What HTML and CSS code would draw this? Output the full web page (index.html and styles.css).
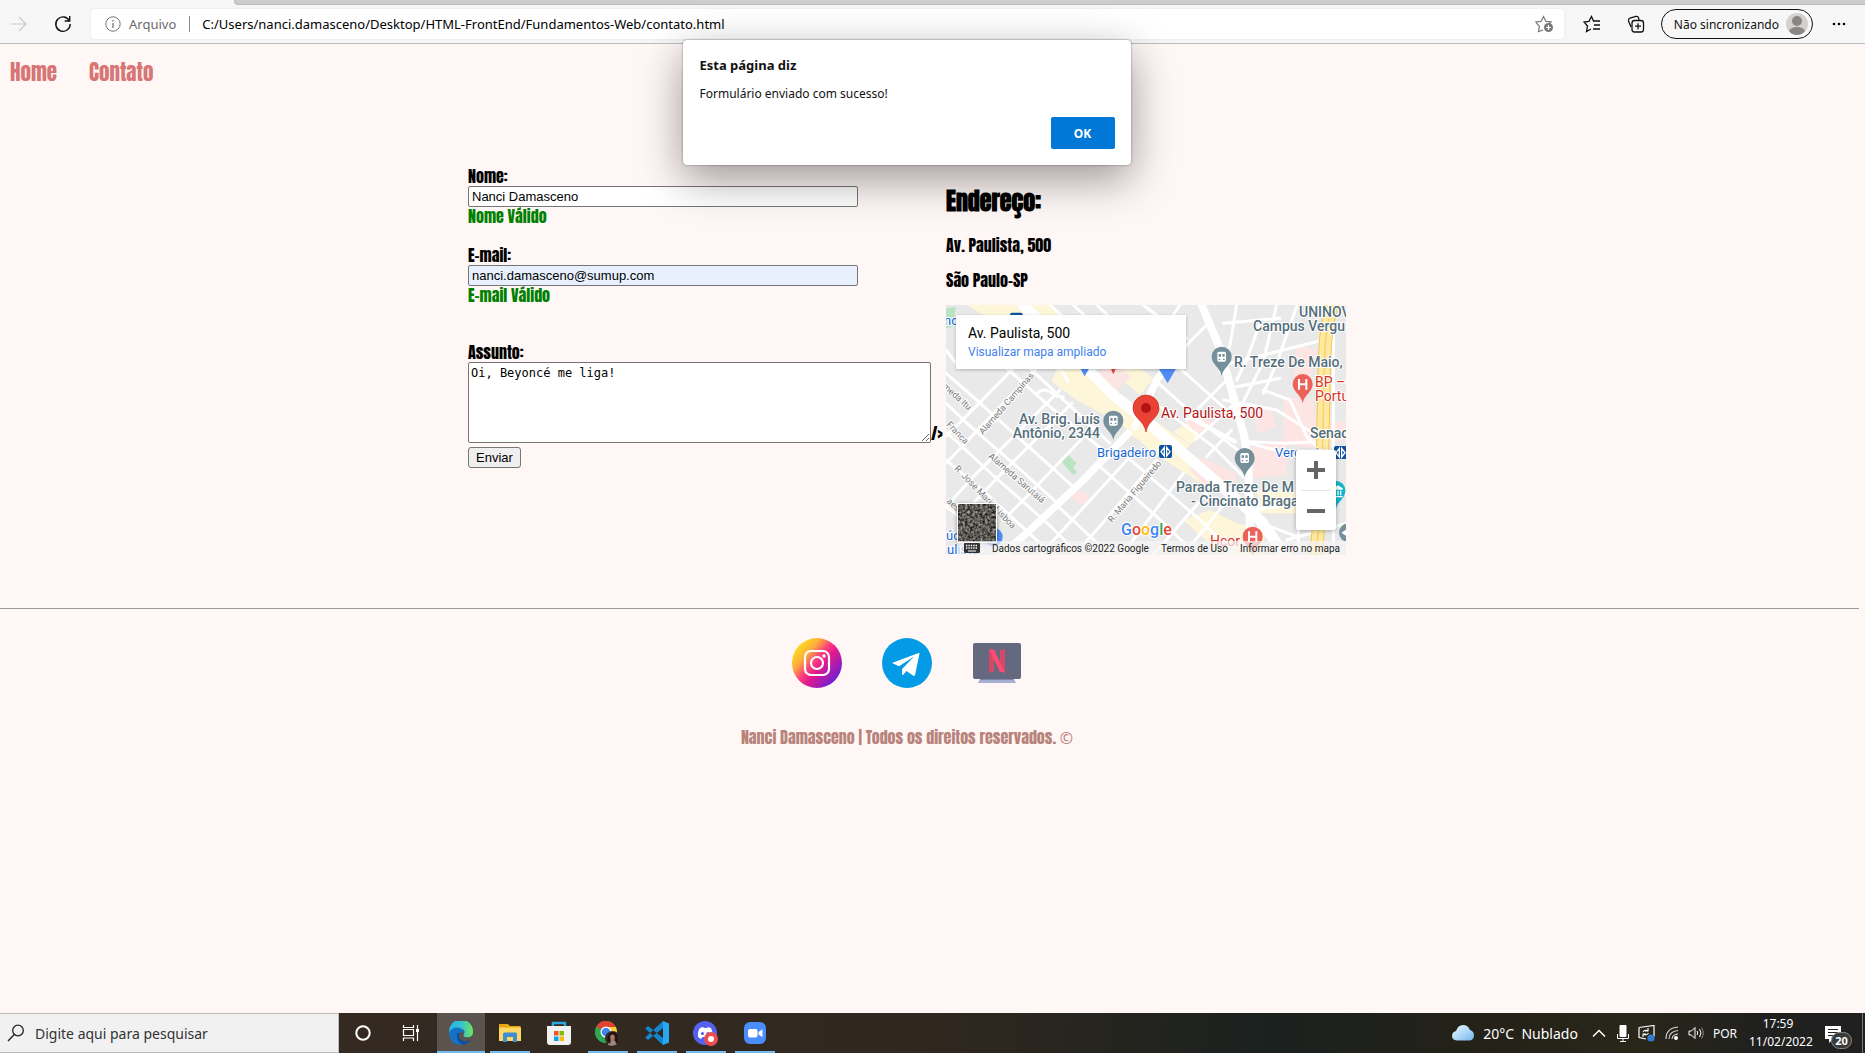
FILE: index.html
```html
<!DOCTYPE html>
<html lang="pt-BR">
<head>
<meta charset="utf-8">
<meta name="viewport" content="width=device-width, initial-scale=1">
<title>Contato</title>
<link rel="stylesheet" href="styles.css">
</head>
<body>
<header class="browser">
  <div class="tab-strip"></div>
  <div class="toolbar">
    <button class="icon-button forward" type="button" aria-label="Avançar"><svg width="18" height="18" viewBox="0 0 18 18"><path d="M1 9h15M9 2l7 7-7 7" fill="none" stroke="#c9c9c9" stroke-width="1.2"/></svg></button>
    <button class="icon-button reload" type="button" aria-label="Atualizar"><svg width="18" height="18" viewBox="0 0 18 18"><path d="M15.500 6A7.200 7.200 0 1 0 16.200 9M15.700 1v5h-5" fill="none" stroke="#111" stroke-width="1.4"/></svg></button>
    <div class="address">
      <svg width="16" height="16" viewBox="0 0 16 16"><circle cx="8" cy="8" r="7.200" fill="none" stroke="#767676"/><path d="M8 7v5M8 4v1.500" stroke="#767676" stroke-width="1.300"/></svg>
      <span class="scheme">Arquivo</span>
      <span class="url">C:/Users/nanci.damasceno/Desktop/HTML-FrontEnd/Fundamentos-Web/contato.html</span>
      <button class="icon-button" type="button" aria-label="Adicionar aos favoritos"><svg width="20" height="18" viewBox="0 0 20 18"><path d="M8 15l-4.500 1.500.8-5.200L1 7l5-.6L8.500 1.500 11 6.400l5 .6-2 2" fill="none" stroke="#767676" stroke-width="1.200"/><circle cx="13.500" cy="12.500" r="4.500" fill="#767676"/><path d="M11 12.500h5M13.500 10v5" stroke="#fff" stroke-width="1.200"/></svg></button>
    </div>
    <button class="icon-button" type="button" aria-label="Favoritos"><svg width="18" height="18" viewBox="0 0 18 18"><path d="M8 14l-4.500 2.500L4.500 11 1 7l5-.6L8.500 1.500 10.500 6h6.500M11 10h6M10 14h7" fill="none" stroke="#111" stroke-width="1.300"/></svg></button>
    <button class="icon-button" type="button" aria-label="Coleções"><svg width="18" height="18" viewBox="0 0 18 18"><path d="M4 12L1.500 6Q1 4 3 3l6-1.600q2-.4 2.500 1.200L12 5" fill="none" stroke="#111" stroke-width="1.300"/><rect x="5" y="5.500" width="11.500" height="11.500" rx="2.500" fill="none" stroke="#111" stroke-width="1.300"/><path d="M8 11.200h6M11 8.200v6" stroke="#111" stroke-width="1.300"/></svg></button>
    <button class="profile" type="button">Não sincronizando
      <svg width="22" height="22" viewBox="0 0 22 22"><circle cx="11" cy="11" r="11" fill="#d3d0cd"/><circle cx="11" cy="8" r="5" fill="#8b8683"/><path d="M3 18q2-4 8-4t8 4q-3 4-8 4t-8-4z" fill="#8b8683"/></svg>
    </button>
    <button class="icon-button more" type="button" aria-label="Mais opções"><svg width="14" height="4" viewBox="0 0 14 4"><circle cx="2" cy="2" r="1.300"/><circle cx="7" cy="2" r="1.300"/><circle cx="12" cy="2" r="1.300"/></svg></button>
  </div>
</header>

<div class="page">
  <nav class="menu"><a href="#home">Home</a><a href="#contato">Contato</a></nav>
  <main class="contact">
    <form class="form">
      <div class="field">
        <label for="nome">Nome:</label>
        <input id="nome" type="text" value="Nanci Damasceno">
        <span class="valid">Nome Válido</span>
      </div>
      <div class="field">
        <label for="email">E-mail:</label>
        <input id="email" class="autofilled" type="text" value="nanci.damasceno@sumup.com">
        <span class="valid">E-mail Válido</span>
      </div>
      <div class="field subject">
        <label for="assunto">Assunto:</label>
        <div class="message"><textarea id="assunto">Oi, Beyoncé me liga!</textarea><span>/&gt;</span></div>
        <button class="send" type="button">Enviar</button>
      </div>
    </form>
    <section class="place">
      <h2>Endereço:</h2>
      <p>Av. Paulista, 500</p>
      <p>São Paulo-SP</p>
      <div class="map">
        <svg class="map-canvas" viewBox="0 0 400 250">
          <svg width="400" height="250" viewBox="18 15 1200 750">
            <rect x="18" y="15" width="1200" height="750" fill="#e9e9e9"/>
            <g fill="#fef6d9">
              <path d="M80 15H330L380 60 220 60 180 45 130 45z"/>
              <path d="M350 205h90l170 150 160 140 90 80-60-15-160-100-100-90-130-70-75-55z"/>
              <path d="M620 345l130 90-40 45-150-80z"/><path d="M520 205h80l40 30-40 50-70-60z"/>
              <path d="M730 660l80-30 80 40 90 20-20 75H850l-70-60z"/><path d="M700 395l80-50 30 30-60 60z"/><path d="M950 570h120v70h-110z"/>
            </g>
            <g fill="#fce5e3">
              <path d="M490 205h50l35 25-65 60-60-50z"/><path d="M385 590l15-22 52 18-22 32z"/>
              <path d="M750 510l30-40 110 50-10 45-90-10z"/><path d="M930 440l110-20v105l-100 10z"/>
              <path d="M1030 290l90 10 20 150-110-20z"/><path d="M1070 130l60 20-20 90-50-10z"/><path d="M940 340l50-20 20 60-55 20z"/><path d="M740 365l35-25 45 30-45 40z"/>
              <path d="M1165 365h53v60h-53z"/><path d="M300 150l60-20 20 70h-60z"/>
            </g>
            <path d="M365 485l20-20 25 25-12 12 14 16-14 6zM18 25l30-5-10 60-20 5z" fill="#b9e3c2"/>
            <g fill="none" stroke="#fff" stroke-width="9" stroke-linejoin="round" stroke-linecap="round">
              <path d="M18 220L110 300l100 90 190 170M18 310l80 75 150 130 110 100M18 395l140 130 170 150 90 90M18 480l130 110 120 110 70 65M200 205L330 320l85 70 80 65M270 205l240 225M18 620l190 145"/>
              <path d="M18 150L60 205M220 205L18 410M290 205L90 415 18 490M360 270L100 530 18 620M395 310L175 530 100 610M460 380L245 605 190 660M650 205"/>
              <path d="M570 470L300 765M650 480L470 690 400 765M730 520L545 765M800 580L640 765M850 615L730 765"/>
              <path d="M480 500l170 150 120 115M560 470l220 190 100 100M350 615l160 150"/>
              <path d="M650 245L800 380l120 90M720 205l140 125M620 290l200 150 90 90"/>
              <path d="M680 205l70-80 60-60M740 360l120-120M765 420l110-100M800 470l75-80"/>
              <path d="M890 15l-20 120-30 80M960 70l-40 110-30 60M1010 15l-40 170-70 140 20 100M1070 20l-60 170-40 90M850 70l170-15M870 190L1150 120M890 260l130-25M850 300l160 30 110 70M970 270l80 30 50 110 60 60"/>
              <path d="M925 425l110 5 100-5M930 430l150 40M930 630l130-15M940 660l130 50M955 600v110M1075 450v300M1120 640l98-60M1180 15v750M1040 720l178-50"/>
              <path d="M330 15l110 100M400 15l90 85M470 15l80 75M720 15l-80 120M610 15l130 100"/>
              <path d="M290 280c40-30 50 20 80 10M360 205l25 40"/>
            </g>
            <g fill="none" stroke="#fff" stroke-linecap="round" stroke-linejoin="round">
              <path d="M250 15l270 270 95 75 260 225 90 80 70 100" stroke-width="32"/>
              <path d="M565 400L425 545 260 700 180 765M585 380l65-140 60-80" stroke-width="22"/>
              <path d="M785 15l55 130 72 260 13 85 5 220" stroke-width="24"/>
              <path d="M885 425l-130-70" stroke-width="13"/>
            </g>
            <path d="M1182 0C1130 130 1170 340 1128 765" fill="none" stroke="#f8c74e" stroke-width="40"/>
            <path d="M1182 0C1130 130 1170 340 1128 765" fill="none" stroke="#fdeaa0" stroke-width="34"/>
            <path d="M1182 0C1130 130 1170 340 1128 765" fill="none" stroke="#f8cf69" stroke-width="4"/>
            <g fill="#4f8df5"><path d="M420 205h28l-14 24zM655 205h54l-26 44z"/><circle cx="160" cy="711" r="28"/></g>
            <path d="M512 205h16l-8 18z" fill="#e94235"/>
            <rect x="210" y="38" width="38" height="20" rx="6" fill="#0d53a1"/>
            <g fill="#758f9b">
              <path d="M520 420c-4-26-30-34-30-58a30 30 0 0 1 60 0c0 24-26 32-30 58zM845 228c-4-26-30-34-30-58a30 30 0 0 1 60 0c0 24-26 32-30 58zM914 532c-4-26-30-34-30-58a30 30 0 0 1 60 0c0 24-26 32-30 58z"/>
              <circle cx="1225" cy="698" r="28"/>
            </g>
            <path d="M1204 698l14-9v18z" fill="#fff"/>
            <g fill="#fff"><rect x="507" y="347" width="26" height="30" rx="5"/><rect x="832" y="155" width="26" height="30" rx="5"/><rect x="901" y="459" width="26" height="30" rx="5"/></g>
            <g fill="#758f9b"><path d="M511 354h7v8h-7zM522 354h7v8h-7zM511 368h5v4h-5zM524 368h5v4h-5zM836 162h7v8h-7zM847 162h7v8h-7zM836 176h5v4h-5zM849 176h5v4h-5zM905 466h7v8h-7zM916 466h7v8h-7zM905 480h5v4h-5zM918 480h5v4h-5z"/></g>
            <g fill="#ec625b"><path d="M1088 310c-4-26-30-34-30-58a30 30 0 0 1 60 0c0 24-26 32-30 58zM938 768c-4-26-30-34-30-58a30 30 0 0 1 60 0c0 24-26 32-30 58z"/></g>
            <path d="M1077 237v32M1099 237v32M1077 253h22M927 694v32M949 694v32M927 710h22" fill="none" stroke="#fff" stroke-width="6"/>
            <path d="M1188 628v-86a30 30 0 0 1 28 32c0 22-24 30-28 54z" fill="#12b5cb"/><path d="M1180 565l14-9 14 9v4h-28zM1184 572h4v14h-4zM1192 572h4v14h-4zM1200 572h4v14h-4zM1180 588h28v4h-28z" fill="#fff"/>
            <path d="M618 396c-5-34-39-42-39-72a39 39 0 0 1 78 0c0 30-34 38-39 72z" fill="#ea4335" stroke="#c5221f" stroke-width="2"/>
            <circle cx="618" cy="324" r="15" fill="#b31412"/>
            <g fill="#0d53a1"><rect x="657" y="435" width="39" height="39" rx="6"/><rect x="1182" y="438" width="39" height="39" rx="6"/></g>
            <path d="M673 442l-10 13 10 13zM680 442l10 13-10 13zM1198 445l-10 13 10 13zM1205 445l10 13-10 13z" fill="none" stroke="#fff" stroke-width="4"/>
          </svg>
          <g class="street">
            <text transform="translate(37 130) rotate(-49)">Alameda Campinas</text>
            <text transform="translate(-4 82) rotate(42)">meda Itu</text>
            <text transform="translate(0 120) rotate(46)">Franca</text>
            <text transform="translate(42 152) rotate(41)">Alameda Sarutaiá</text>
            <text transform="translate(8 164) rotate(46)">R. José Maria Lisboa</text>
            <text transform="translate(166 218) rotate(-50)">R. Maria Figueiredo</text>
            <text transform="translate(0 197) rotate(42)">aes</text>
          </g>
          <g class="label">
            <text x="154" y="119" text-anchor="end">Av. Brig. Luís</text>
            <text x="154" y="133" text-anchor="end">Antônio, 2344</text>
            <text x="353" y="12">UNINOV</text>
            <text x="307" y="26">Campus Vergu</text>
            <text x="288" y="62">R. Treze De Maio,</text>
            <text x="364" y="133">Senac</text>
            <text x="230" y="187">Parada Treze De M</text>
            <text x="245" y="201">- Cincinato Braga</text>
          </g>
          <g class="label station"><text x="151" y="152">Brigadeiro</text><text x="329" y="152">Vergueiro</text><text x="-2" y="20">no</text><text x="0" y="235">úc</text><text x="1" y="249">ulista</text></g>
          <g class="label hospital"><text x="369" y="82">BP –</text><text x="369" y="96">Portu</text><text x="264" y="241">Hcor</text></g>
          <text class="label target" x="215" y="113">Av. Paulista, 500</text>
          <text class="logo" x="175" y="230"><tspan fill="#4285f4">G</tspan><tspan fill="#ea4335">o</tspan><tspan fill="#fbbc05">o</tspan><tspan fill="#4285f4">g</tspan><tspan fill="#34a853">l</tspan><tspan fill="#ea4335">e</tspan></text>
        </svg>
        <div class="map-card"><strong>Av. Paulista, 500</strong><a href="#mapa">Visualizar mapa ampliado</a></div>
        <div class="zoom"><button type="button" aria-label="Aumentar zoom"><svg width="18" height="18" viewBox="0 0 18 18"><path d="M0 9h18M9 0v18" stroke="#666" stroke-width="4"/></svg></button><button type="button" aria-label="Diminuir zoom"><svg width="18" height="18" viewBox="0 0 18 18"><path d="M0 9h18" stroke="#666" stroke-width="4"/></svg></button></div>
        <button class="satellite" type="button" aria-label="Mostrar imagens de satélite"><svg width="38" height="38" viewBox="0 0 38 38"><filter id="ground" x="0" y="0" width="1" height="1" color-interpolation-filters="sRGB"><feTurbulence type="fractalNoise" baseFrequency=".4" numOctaves="3" seed="4"/><feColorMatrix values="1 0 0 0 -.14 .9 .1 0 0 -.15 .9 0 .1 0 -.17 0 0 0 0 1"/></filter><rect width="38" height="38" filter="url(#ground)"/></svg></button>
        <div class="map-footer">
          <svg width="16" height="10" viewBox="0 0 16 10"><rect width="16" height="10" rx="1" fill="#333"/><path d="M2 2.500h12M2 5h12" stroke="#fff" stroke-width="1.300" stroke-dasharray="1.400 1"/><path d="M4 8h8" stroke="#fff"/></svg>
          <span>Dados cartográficos ©2022 Google</span><a href="#termos">Termos de Uso</a><a href="#erro">Informar erro no mapa</a>
        </div>
      </div>
    </section>
  </main>
  <footer class="footer">
    <div class="social">
      <a href="#instagram" aria-label="Instagram"><svg width="50" height="50" viewBox="0 0 50 50"><defs><linearGradient id="insta" x1=".1" y1=".15" x2=".9" y2=".85"><stop offset="0" stop-color="#fbe01d"/><stop offset=".25" stop-color="#fdac3a"/><stop offset=".45" stop-color="#fb3d7d"/><stop offset=".6" stop-color="#e41a8b"/><stop offset="1" stop-color="#6720d8"/></linearGradient></defs><circle cx="25" cy="25" r="25" fill="url(#insta)"/><rect x="13" y="13" width="24" height="24" rx="6" fill="none" stroke="#fff" stroke-width="2.200"/><circle cx="25" cy="25" r="6" fill="none" stroke="#fff" stroke-width="2.200"/><circle cx="32" cy="18" r="1.700" fill="#fff"/></svg></a>
      <a href="#telegram" aria-label="Telegram"><svg width="50" height="50" viewBox="0 0 50 50"><circle cx="25" cy="25" r="25" fill="#039be5"/><path d="M10 25l26.500-10q1.200-.2 1 1l-4.500 21q-.5 1.500-2 .6L24.500 33l-3.500 4q-.9.300-.9-.8V31l12-12.500L17 28.200z" fill="#fff"/></svg></a>
      <a href="#netflix" aria-label="Netflix"><svg width="50" height="50" viewBox="0 0 50 50"><path d="M8 41h34l2 4H6z" fill="#a4afd2"/><path d="M8 40h33v2H8z" fill="#7d86aa"/><rect x="1" y="5" width="48" height="36" rx="2" fill="#646980"/><path d="M17 11.500h5V34l-5 .5z" fill="#d3486b"/><path d="M28 11.500h5V34.500l-5-.5z" fill="#d3486b"/><path d="M17 11.500h5L33 34.500l-5-.5z" fill="#ff4b70"/></svg></a>
    </div>
    <p>Nanci Damasceno | Todos os direitos reservados. <span class="copy">©</span></p>
  </footer>
</div>

<div class="dialog" role="alertdialog" aria-labelledby="dialog-title">
  <h1 id="dialog-title">Esta página diz</h1>
  <p>Formulário enviado com sucesso!</p>
  <button type="button">OK</button>
</div>

<div class="taskbar">
  <label class="search"><svg width="18" height="18" viewBox="0 0 18 18"><circle cx="11" cy="6.500" r="5.300" fill="none" stroke="#222" stroke-width="1.300"/><path d="M7.300 10.500L1 17" stroke="#222" stroke-width="1.400"/></svg><input type="text" placeholder="Digite aqui para pesquisar" aria-label="Pesquisar"></label>
  <div class="apps">
    <button type="button" aria-label="Cortana"><svg width="16" height="16" viewBox="0 0 16 16"><circle cx="8" cy="8" r="6.700" fill="none" stroke="#fff" stroke-width="2"/></svg></button>
    <button type="button" aria-label="Visão de tarefas"><svg width="18" height="18" viewBox="0 0 18 18"><path d="M1.500 1v2.500h10V1M1.500 17v-3h10v3M1.500 5.500h10v6h-10zM15.500 1v16" fill="none" stroke="#fff" stroke-width="1.200"/><rect x="14" y="5" width="3" height="3" fill="#fff"/></svg></button>
    <button class="open active" type="button" aria-label="Edge"><svg width="24" height="24" viewBox="0 0 24 24"><defs><linearGradient id="edge"><stop offset="0" stop-color="#26b5e8"/><stop offset=".5" stop-color="#35c1d4"/><stop offset="1" stop-color="#6fe45c"/></linearGradient></defs><path d="M0 11A12 12 0 0 1 24 10q.5 6-5.500 6.200-5.500-.2-3.500-3.200Q17 8 11 8 4 8 0 14z" fill="url(#edge)"/><path d="M0 12q2-5.500 8-5.500 6 0 7 4.500-5 0-5 5 1 5 7 5.500Q14 24 11 24 1 23 0 12z" fill="#1572c4"/><path d="M8 13q-1 8 6 10.800 5-.5 8-5-6 2.800-10 0-3.500-3-1-7-2 0-3 1.200z" fill="#0d4f9a"/></svg></button>
    <button class="open" type="button" aria-label="Explorador de arquivos"><svg width="22" height="20" viewBox="0 0 22 20"><path d="M0 1h9l2 2h10.500v15H0z" fill="#e8a512"/><path d="M0 4.500h22V18H0z" fill="#fdd663"/><path d="M4 11q0-1.500 1.500-1.500h11q1.500 0 1.500 1.500v8h-4v-5H8v5H4z" fill="#3e8ed0"/></svg></button>
    <button type="button" aria-label="Microsoft Store"><svg width="24" height="24" viewBox="0 0 24 24"><path d="M6 6V2h12v4" fill="none" stroke="#29a7df" stroke-width="2.500"/><path d="M0 5h24v16q0 3-3 3H3q-3 0-3-3z" fill="#f1f1f1"/><path d="M7 10h4.500v4.500H7z" fill="#f35325"/><path d="M12.500 10H17v4.500h-4.500z" fill="#81bc06"/><path d="M7 15.500h4.500V20H7z" fill="#05a6f0"/><path d="M12.500 15.500H17V20h-4.500z" fill="#ffba08"/></svg></button>
    <button class="open" type="button" aria-label="Chrome"><svg width="25" height="25" viewBox="0 0 25 25"><circle cx="11" cy="11" r="11" fill="#30a552"/><path d="M11 11L1.500 5.500A11 11 0 0 1 20.800 6H11z" fill="#e34133"/><path d="M1.500 5.500L7 15 11 22A11 11 0 0 1 1.500 5.500z" fill="#30a552"/><path d="M11 6h9.800A11 11 0 0 1 12 22l4-8z" fill="#fdd033"/><circle cx="11" cy="11" r="5.500" fill="#fff"/><circle cx="11" cy="11" r="4.300" fill="#4384f3"/><circle cx="17.500" cy="17.500" r="7.500" fill="#3a2824"/><path d="M13 24q0-5 4-5t5 4q-4 3-9 1z" fill="#a18780"/><path d="M12.500 21q0-11 6-10 5 1 4.500 10l-2 2-1-6h-4l-1 6z" fill="#1d1516"/><ellipse cx="17.500" cy="16.500" rx="2.300" ry="3" fill="#b07860"/></svg></button>
    <button class="open" type="button" aria-label="Visual Studio Code"><svg width="24" height="24" viewBox="0 0 24 24"><path d="M18 0v7L3 19l-2.800-2.500zM18 24v-7L3 5 .2 7.500z" fill="#1286cf"/><path d="M18 0l6 2.500v19L18 24z" fill="#29a8f2"/></svg></button>
    <button class="open" type="button" aria-label="Discord"><svg width="25" height="25" viewBox="0 0 25 25"><circle cx="12" cy="12" r="12" fill="#5561ee"/><path d="M5 16q-.5-6 2-9l3-1 1 1h3l1-1 3 1q2 4 2 9l-3 2-1.500-2h-6L8 18z" fill="#fff"/><circle cx="9.500" cy="12.500" r="1.600" fill="#5561ee"/><circle cx="15" cy="12.500" r="1.600" fill="#5561ee"/><circle cx="18" cy="18" r="7" fill="#ed4e50"/><circle cx="18" cy="18" r="3" fill="#fff"/></svg></button>
    <button class="open" type="button" aria-label="Zoom"><svg width="22" height="22" viewBox="0 0 22 22"><rect width="22" height="22" rx="6" fill="#4a8dfb"/><rect x="4" y="7" width="9.500" height="8.500" rx="2" fill="#fff"/><path d="M14.500 10l4-2.800v8l-4-2.700z" fill="#fff"/></svg></button>
  </div>
  <div class="tray">
    <svg width="22" height="16" viewBox="0 0 22 16"><defs><linearGradient id="cloud" x2="1" y2="1"><stop offset="0" stop-color="#f3faff"/><stop offset="1" stop-color="#72b7ee"/></linearGradient></defs><path d="M5 15.500Q0 15 0 11t4-5Q6 0 11 0t7 5q4 1 4 5.500-.5 5-5 5z" fill="url(#cloud)"/></svg>
    <span class="weather">20°C&nbsp; Nublado</span>
    <svg width="14" height="8" viewBox="0 0 14 8"><path d="M1 7.500l6-6 6 6" fill="none" stroke="#fff" stroke-width="1.500"/></svg>
    <svg width="14" height="17" viewBox="-2 0 14 17"><rect x="2.500" width="7" height="12" rx="1" fill="#fff"/><path d="M.5 9v4.500h11V9M6 13v3M3 16.500h6" fill="none" stroke="#fff"/></svg>
    <svg width="18" height="17" viewBox="0 0 18 17"><path d="M1 2.500l15-2v11M8 14l-7-1.500v-10" fill="none" stroke="#fff" stroke-width="1.200"/><path d="M5 7q2-3 5-1M10 3v3H7M10.500 8q-2 3-5 1M5 12V9h3" fill="none" stroke="#fff" stroke-width="1.100"/><circle cx="13" cy="13" r="3.600" fill="#2f7cd0"/></svg>
    <svg width="14" height="14" viewBox="0 0 14 14"><path d="M1 13Q1 2 13 1M4 13Q4 5.500 13 4.500M7 13q.5-4.500 6-5" fill="none" stroke="#ddd" stroke-width="1.100"/><circle cx="11" cy="12" r="2" fill="#fff"/></svg>
    <svg width="16" height="14" viewBox="0 0 16 14"><path d="M1 5h2.500L7 1.500v11L3.500 9H1z" fill="none" stroke="#fff"/><path d="M9 5q1.500 2 0 4M11.500 3q3 4 0 8" fill="none" stroke="#fff"/><path d="M13.500 1.500q3.500 5.500 0 11" fill="none" stroke="#888"/></svg>
    <span class="language">POR</span>
    <span class="clock"><span>17:59</span><span>11/02/2022</span></span>
    <button class="notices" type="button" aria-label="Notificações"><svg width="17" height="17" viewBox="0 0 17 17"><path d="M0 0h16v13H8l-4 4v-4H0z" fill="#fff"/><path d="M3 3.500h10M3 6.500h10M3 9.500h6" stroke="#222"/></svg><span>20</span></button>
  </div>
</div>
</body>
</html>
```
FILE: styles.css
```css
* { box-sizing: border-box; }
body {
  margin: 0;
  min-height: 100vh;
  display: flex;
  flex-direction: column;
  position: relative;
  background: #fff7f5;
  font-family: "Liberation Sans", sans-serif;
}
button { font: inherit; margin: 0; padding: 0; border: 0; background: none; color: inherit; }
svg { display: block; flex: none; }
h1, h2, p { margin: 0; }

.browser { background: #f7f7f7; border-bottom: 1px solid #bcbebd; font-family: "Noto Sans", sans-serif; }
.tab-strip { height: 5px; margin-left: 234px; background: #cdcdcd; border-bottom: 1px solid #bbb; border-left: 1px solid #bbb; border-bottom-left-radius: 4px; }
.toolbar { display: flex; align-items: center; height: 38px; padding: 0 19px 0 10px; }
.forward { width: 44px; }
.reload { width: 37px; }
.address { flex: 1; display: flex; align-items: center; height: 30px; margin-right: 19px; padding: 0 9px 0 14px; border-radius: 4px; background: #fff; box-shadow: 0 0 3px #e4e4e4; font-size: 13px; }
.scheme { margin-left: 8px; padding-right: 13px; border-right: 1px solid #888; line-height: 16px; color: #6b6b6b; }
.url { flex: 1; margin-left: 12px; }
.toolbar > .icon-button + .icon-button { margin-left: 26px; }
.toolbar > .forward + .reload { margin-left: 0; }
.profile { display: flex; align-items: center; gap: 7px; height: 30px; margin: 0 19px 0 16px; padding: 0 4px 0 12px; border: 1px solid #111; border-radius: 15px; font-size: 12px; color: #111; }

.page { flex: 1; padding-right: 51px; font-family: Anton, Impact, "Noto Sans CJK JP", sans-serif; font-size: 16px; font-weight: 400; }
.menu { display: flex; gap: 32px; padding: 16px 10px 0; font-size: 21px; line-height: 24px; }
.menu a { color: #d87575; text-decoration: none; }
.contact { display: flex; justify-content: center; padding-top: 83px; }
.form { width: 478px; }
.field { display: flex; flex-direction: column; align-items: flex-start; margin-bottom: 20px; line-height: 19px; }
.field.subject { margin: 0; padding-top: 18px; }
.field input { width: 390px; height: 21px; padding: 0 3px; border: 1px solid #767676; border-radius: 2px; font: 13px "Liberation Sans", sans-serif; background: #fff; color: #000; }
.field .autofilled { background: #e8f0fe; }
.valid { color: #008000; }
.message { display: flex; align-items: flex-end; }
.message textarea { width: 463px; height: 81px; padding: 3px 2px; border: 1px solid #767676; border-radius: 2px; font: 12px "DejaVu Sans Mono", monospace; color: #000; }
.send { height: 21px; margin-top: 4px; padding: 0 7px; border: 1px solid #767676; border-radius: 3px; background: #efefef; font: 13px "Liberation Sans", sans-serif; }
.place { width: 400px; }
.place h2 { padding-top: 18px; font-size: 24px; line-height: 32px; font-weight: 700; }
.place p { margin-top: 16px; line-height: 19px; }
.place h2 + p { margin-top: 19px; }

.map { position: relative; margin-top: 15px; height: 250px; overflow: hidden; font-family: Roboto, sans-serif; font-weight: 400; }
.map-canvas { width: 100%; height: 100%; }
.map-canvas text { paint-order: stroke; stroke: #fff; stroke-width: 2px; }
.street { font-size: 9px; fill: #777; }
.label { font-size: 14px; fill: #546e7a; font-weight: 500; }
.station { font-size: 13px; fill: #1967d2; font-weight: 400; }
.hospital { fill: #d93025; font-weight: 400; }
.label.target { fill: #b31412; font-weight: 400; }
.logo { font: 500 16px Roboto, sans-serif; }
.map-card { position: absolute; left: 10px; top: 10px; width: 230px; height: 54px; padding: 9px 12px; background: #fff; box-shadow: 0 1px 3px rgba(0,0,0,.25); line-height: 19px; font-size: 12px; }
.map-card strong { display: block; font-size: 14px; font-weight: 400; }
.map-card a { color: #427fed; text-decoration: none; }
.zoom { position: absolute; right: 10px; bottom: 25px; width: 40px; padding: 0 5px; background: #fff; border-radius: 2px; box-shadow: 0 1px 4px rgba(0,0,0,.3); }
.zoom button { display: grid; place-items: center; width: 30px; height: 40px; }
.zoom button + button { border-top: 1px solid #e6e6e6; }
.satellite { position: absolute; left: 11px; bottom: 12px; border: 1px solid #fff; box-shadow: 0 1px 4px rgba(0,0,0,.4); }
.map-footer { position: absolute; right: 0; bottom: 0; display: flex; align-items: center; gap: 12px; height: 14px; padding: 0 6px; background: rgba(245,245,245,.7); font-size: 10px; color: #222; }
.map-footer a { color: inherit; text-decoration: none; }

.footer { margin-top: 53px; text-align: center; color: #b8837b; }
.footer::before { content: ""; display: block; height: 1px; margin-right: -45px; background: #999; }
.social { display: flex; justify-content: center; gap: 40px; padding: 29px 0 37px; }
.footer p { line-height: 24px; }
.copy { font-family: "Noto Sans", sans-serif; }

.dialog { position: absolute; left: calc(50% - 250px); top: 40px; width: 448px; height: 125px; padding: 16px 16px 16px 17px; border-radius: 4px; background: #fff; box-shadow: 0 0 2px rgba(0,0,0,.5), 0 14px 44px rgba(0,0,0,.4); font: 12px "Noto Sans", sans-serif; display: flex; flex-direction: column; color: #111; }
.dialog h1 { font-size: 13px; line-height: 18px; }
.dialog p { margin-top: 10px; line-height: 20px; }
.dialog button { width: 64px; height: 32px; margin: auto 0 0 auto; border-radius: 2px; background: #0078d7; color: #fff; font-weight: 700; }

.taskbar { display: flex; height: 40px; padding-right: 2px; color: #fff; background: linear-gradient(90deg, #362b22 0%, #30281f 50%, #1b211f 68%, #242218 80%, #29271a 88%, #20201f 94%, #202020 100%); font-family: "Noto Sans", sans-serif; }
.search { display: flex; align-items: center; gap: 10px; width: 339px; padding-left: 7px; background: #f1f1f1; border: solid #bbb; border-width: 1px 1px 1px 0; }
.search input { flex: 1; min-width: 0; padding: 0; border: 0; background: none; font: 14px "Noto Sans", sans-serif; }
.search input::placeholder { color: #333; opacity: 1; }
.apps { display: flex; }
.apps button { display: grid; place-items: center; width: 49px; height: 40px; }
.apps button:not(.open):nth-child(-n+2) { width: 48px; }
.apps .open { background: linear-gradient(#76b9ed, #76b9ed) center bottom / 40px 2px no-repeat; }
.apps .active { margin-left: 2px; width: 48px; background-color: #5b534d; background-size: 100% 2px; }
.tray { display: flex; align-items: center; gap: 9px; margin-left: auto; padding-right: 11px; border-right: 1px solid #777; font-size: 12px; }
.weather { margin-right: 5px; font-size: 14px; }
.clock { display: flex; flex-direction: column; width: 58px; margin: 0 9px 0 3px; text-align: center; line-height: 18px; }
.notices { position: relative; width: 26px; height: 26px; padding-top: 2px; }
.notices span { position: absolute; right: -1px; bottom: -3px; width: 21px; height: 17px; border: 1px solid #888; border-radius: 9px; background: #3a3a3a; line-height: 15px; font-size: 11px; font-weight: 700; }
```
